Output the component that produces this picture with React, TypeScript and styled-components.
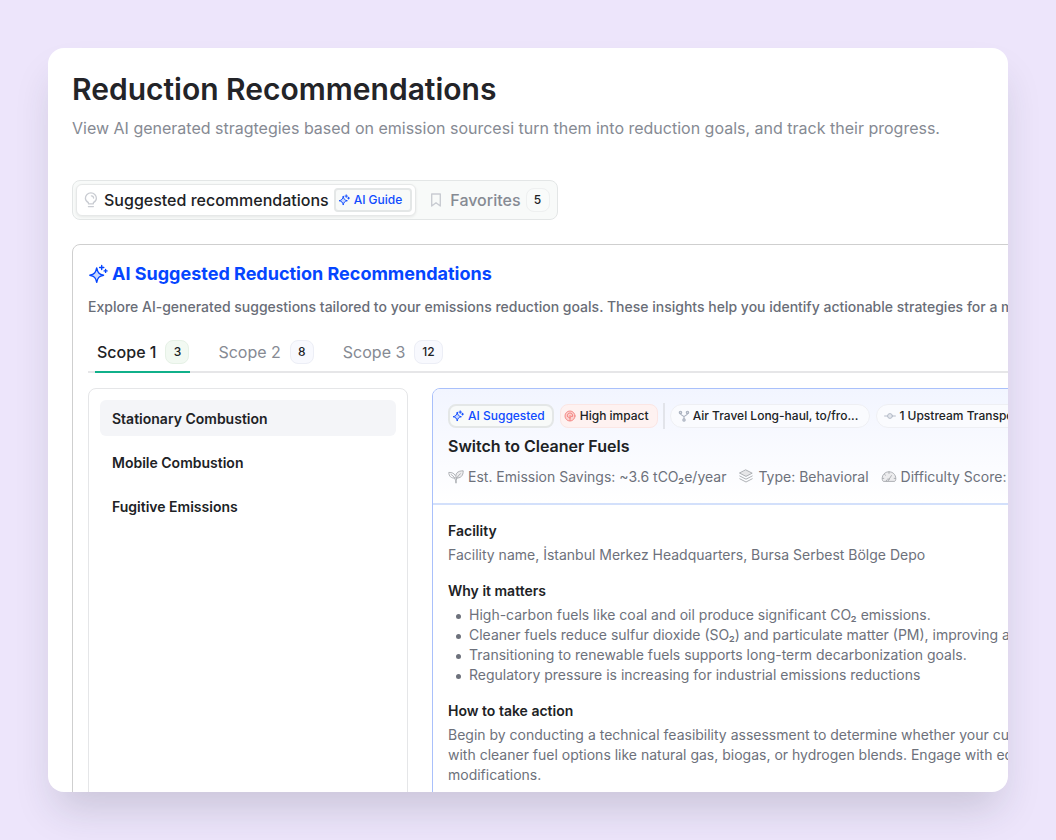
import React, { useState } from "react";
import styled, { createGlobalStyle } from "styled-components";

const GlobalStyle = createGlobalStyle`
  *, *::before, *::after { box-sizing: border-box; }
  body {
    margin: 0;
    background: #ede5fb;
    color: #202225;
    font-family: Inter, "Liberation Sans", sans-serif;
    -webkit-font-smoothing: antialiased;
  }
  h1, h2, h3, h4, p, ul { margin: 0; padding: 0; }
  button { font: inherit; color: inherit; background: none; border: 0; padding: 0; cursor: pointer; }
`;

const Page = styled.div`
  height: 100vh;
  padding: 48px;
`;

const Shell = styled.main`
  height: 100%;
  padding: 24px;
  overflow: hidden;
  background: #fff;
  border-radius: 16px;
  box-shadow: 0 24px 40px -8px rgba(40, 50, 60, 0.18);
`;

const Title = styled.h1`
  font-size: 30px;
  line-height: 34px;
  font-weight: 600;
  color: #232428;
`;

const Subtitle = styled.p`
  margin-top: 10px;
  font-size: 16px;
  line-height: 24px;
  color: #868a93;
  white-space: nowrap;
`;

const Switcher = styled.div`
  display: inline-flex;
  align-items: center;
  gap: 4px;
  height: 40px;
  margin-top: 40px;
  padding: 3px;
  border: 1px solid #e3e6e6;
  border-radius: 8px;
  background: #f8faf9;
`;

const SwitchTab = styled.button<{ $active?: boolean }>`
  display: flex;
  align-items: center;
  gap: 5px;
  height: 32px;
  padding: 0 3px 0 6px;
  border: 1px solid ${(p) => (p.$active ? "#e6e8e8" : "transparent")};
  border-radius: 6px;
  background: ${(p) => (p.$active ? "#fff" : "transparent")};
  box-shadow: ${(p) => (p.$active ? "0 1px 3px rgba(0, 0, 0, 0.08)" : "none")};
  color: ${(p) => (p.$active ? "#202225" : "#868a93")};
  font-size: 16px;
  line-height: 24px;
  font-weight: 500;
  white-space: nowrap;
`;

const Count = styled.span<{ $tone?: "green" | "blue" | "plain" }>`
  display: inline-flex;
  align-items: center;
  justify-content: center;
  min-width: 24px;
  height: 24px;
  padding: 0 7px;
  border: 1px solid ${(p) => (p.$tone === "green" ? "#e6f1e6" : p.$tone === "blue" ? "#eceef6" : "#eef0f0")};
  border-radius: 8px;
  background: ${(p) => (p.$tone === "green" ? "#f2f9f2" : p.$tone === "blue" ? "#f8f9fe" : "#f9fbfa")};
  color: #202225;
  font-size: 12px;
  line-height: 16px;
  font-weight: 500;
`;

const tagPadding = { guide: "0 8px 0 2px", ai: "0 7px 0 2px", impact: "0 8px 0 3px", source: "0 11px 0 7px" };

const Tag = styled.span<{ $kind: "guide" | "ai" | "impact" | "source" }>`
  display: inline-flex;
  flex: none;
  align-items: center;
  gap: ${(p) => (p.$kind === "source" ? "3px" : "4px")};
  height: 24px;
  padding: ${(p) => tagPadding[p.$kind]};
  border: ${(p) => (p.$kind === "guide" || p.$kind === "ai" ? "2px solid #e4e7e7" : p.$kind === "impact" ? "1px solid #fbe6e4" : "1px solid #eeeff3")};
  border-radius: ${(p) => (p.$kind === "guide" ? "4px" : p.$kind === "source" ? "12px" : "8px")};
  background: ${(p) => (p.$kind === "impact" ? "#fef2f1" : p.$kind === "source" ? "#fafbfe" : "#f8faf9")};
  color: ${(p) => (p.$kind === "guide" || p.$kind === "ai" ? "#0f4bff" : "#202225")};
  font-size: 12px;
  line-height: 16px;
  font-weight: 500;
  white-space: nowrap;
`;

const Panel = styled.section`
  width: max-content;
  min-width: 100%;
  margin-top: 24px;
  padding: 16px 15px 15px;
  border: 1px solid #cfcfcf;
  border-radius: 8px;
`;

const PanelTitle = styled.h2`
  display: flex;
  align-items: center;
  gap: 4px;
  font-size: 18px;
  line-height: 26px;
  font-weight: 700;
  color: #0545ff;
`;

const PanelText = styled.p`
  margin-top: 10px;
  font-size: 14px;
  line-height: 20px;
  font-weight: 500;
  color: #696d77;
  white-space: nowrap;
`;

const ScopeTabs = styled.div`
  display: flex;
  gap: 26px;
  margin-top: 16px;
  padding-left: 7px;
  box-shadow: inset 0 -2px #e6e6e8;
`;

const ScopeTab = styled.button<{ $active: boolean }>`
  display: flex;
  align-items: center;
  gap: 9px;
  height: 40px;
  padding: 0 1px 0 2px;
  border-bottom: 2px solid ${(p) => (p.$active ? "#10b08a" : "transparent")};
  color: ${(p) => (p.$active ? "#202225" : "#868a93")};
  font-size: 16px;
  line-height: 24px;
  font-weight: ${(p) => (p.$active ? 500 : 400)};
`;

const Columns = styled.div`
  display: flex;
  gap: 24px;
  margin-top: 15px;
`;

const SourceNav = styled.nav`
  display: flex;
  flex: none;
  flex-direction: column;
  gap: 8px;
  width: 320px;
  padding: 11px;
  border: 1px solid #e5e6e8;
  border-radius: 8px;
`;

const SourceItem = styled.button<{ $active: boolean }>`
  height: 36px;
  padding: 2px 12px 0;
  border-radius: 6px;
  background: ${(p) => (p.$active ? "#f4f5f8" : "transparent")};
  font-size: 14px;
  line-height: 20px;
  font-weight: 600;
  text-align: left;
`;

const Card = styled.article`
  flex: 1;
  border: 1px solid #a9c0fb;
  border-radius: 8px;
  overflow: hidden;
`;

const CardHead = styled.header`
  padding: 15px 15px 16px;
  border-bottom: 2px solid #d3e0fb;
  background: linear-gradient(#f2f5ff, #fff);
`;

const TagRow = styled.div`
  display: flex;
  align-items: center;
  gap: 6px;
`;

const Divider = styled.span`
  width: 2px;
  height: 26px;
  margin: -1px;
  background: #e2e4ea;
`;

const CardTitle = styled.h3`
  margin-top: 6px;
  font-size: 16px;
  line-height: 24px;
  font-weight: 600;
`;

const MetaRow = styled.div`
  display: flex;
  gap: 12px;
  margin-top: 9px;
  white-space: nowrap;
`;

const Meta = styled.span`
  display: flex;
  align-items: center;
  gap: 4px;
  font-size: 14px;
  line-height: 20px;
  color: #6d717b;
`;

const CardBody = styled.div`
  display: flex;
  flex-direction: column;
  gap: 16px;
  padding: 16px 15px 24px;
`;

const Block = styled.section`
  display: flex;
  flex-direction: column;
  gap: 4px;
  font-size: 14px;
  line-height: 20px;
  color: #6d717b;
  white-space: pre-line;
`;

const BlockTitle = styled.h4`
  font-size: 14px;
  line-height: 20px;
  font-weight: 600;
  color: #202225;
`;

const List = styled.ul`
  && { padding-left: 8px; }
  list-style: none;
`;

const Reason = styled.li`
  display: flex;
  align-items: center;
  gap: 8px;

  &::before {
    content: "";
    width: 5px;
    height: 5px;
    margin-top: 2px;
    border-radius: 50%;
    background: #6d717b;
  }
`;

const Icon = styled.svg`
  flex: none;
  fill: none;
  stroke-linecap: round;
  stroke-linejoin: round;
`;

const Svg = ({ size = 16, color = "currentColor", width = 1, children, box = 16 }: {
  size?: number; color?: string; width?: number; box?: number; children: React.ReactNode;
}) => (
  <Icon width={size} height={size} viewBox={`0 0 ${box} ${box}`} stroke={color} strokeWidth={width} aria-hidden="true">
    {children}
  </Icon>
);

const Sparkle = ({ size, width }: { size: number; width: number }) => (
  <Svg size={size} box={20} width={width}>
    <path d="M8.700 4C9.700 8.800 11 10.200 15.600 11.200 11 12.200 9.700 13.600 8.700 18.400 7.700 13.600 6.400 12.200 1.800 11.200 6.400 10.200 7.700 8.800 8.700 4Z" fill="#c9d8ff" />
    <path d="M13.700 1.400v4.200M11.600 3.500h4.200M17.600 5.400v3M16.100 6.900h3" />
  </Svg>
);

const Bulb = () => (
  <Svg color="#c9ccd2" width={1.3}>
    <path d="M5.400 11.800V10.600C3.600 9.600 2.400 8.200 2.400 6.200A5.500 5.300 0 0 1 13.400 6.200c0 2-1.200 3.400-3 4.400v1.200ZM5.400 14.600h5" />
    <path d="M8.400 3.800A2.300 2.300 0 0 1 10.600 6" />
  </Svg>
);

const Bookmark = () => (
  <Svg color="#c9ccd2" width={1.4} size={18} box={18}>
    <path d="M4.700 3h8.600v12L9 11.800 4.700 15Z" />
  </Svg>
);

const ImpactIcon = () => (
  <Svg size={12} box={12} color="#f4807e" width={0.9}>
    <circle cx="6" cy="6" r="5" fill="#fbd3d0" />
    <path d="M6 10.600V5.400M6 8.200 3.600 6.600M6 7.400 8.400 5.800M3.400 6.400C2.800 4.200 4.600 3 6 3s3.200 1.200 2.600 3.400" />
  </Svg>
);

const ForkIcon = () => (
  <Svg size={12} box={12} color="#a9b1bf" width={1.1}>
    <circle cx="2.500" cy="2.400" r="1.200" fill="#d5d9e0" />
    <circle cx="9.500" cy="2.400" r="1.200" fill="#d5d9e0" />
    <circle cx="6" cy="10" r="1.200" fill="#d5d9e0" />
    <path d="M2.500 3.600c0 2.200 3.500 1.400 3.500 3.400v1.800M9.500 3.600c0 2.200-3.500 1.400-3.500 3.400" />
  </Svg>
);

const NodeIcon = () => (
  <Svg size={12} box={12} color="#b4bbc8" width={1}>
    <circle cx="6" cy="6" r="2.400" fill="#e4e7ed" />
    <path d="M.6 6h3M8.400 6h3" />
  </Svg>
);

const LeafIcon = () => (
  <Svg color="#a6a9ae" width={0.9}>
    <path d="M8.200 9C6.600 4.600 9.600 1.800 15.200 1.800c.2 4.800-2.600 7.800-7 7.200Z" fill="#ececee" />
    <path d="M7 9C3.200 9.600 .8 7.200 .8 3.400c3 0 5.400 .8 6.400 3M3 5.400C6 7.200 7.800 9.800 8 13.800M8 13.800c0-4.200 1.400-6.800 4.400-9" />
  </Svg>
);

const LayersIcon = () => (
  <Svg color="#a6a9ae" width={0.9}>
    <path d="M8 1 14.200 4.200 8 7.400 1.800 4.200Z" fill="#e6e6e8" />
    <path d="M1.800 7 8 10.200 14.200 7M1.800 9.800 8 13l6.200-3.200" />
  </Svg>
);

const GaugeIcon = () => (
  <Svg color="#a6a9ae" width={0.9}>
    <path d="M2.400 12.400C1.500 12.400 1.200 11 1.200 9.600 1.200 5.600 4.200 2.800 8 2.800s6.800 2.800 6.800 6.800c0 1.400-.3 2.800-1.200 2.800Z" fill="#ececee" />
    <path d="M7 12 10.400 6.600M8 2.800v1.600M3.400 5.200l1.100 1M1.400 9.400h1.400M13.200 9.400h1.400M5.200 12.200c.2-2.200 2-2.600 3-2" />
  </Svg>
);

const scopes = [
  { name: "Scope 1", count: 3 },
  { name: "Scope 2", count: 8 },
  { name: "Scope 3", count: 12 },
];

const sources = ["Stationary Combustion", "Mobile Combustion", "Fugitive Emissions"];

const reasons = [
  "High-carbon fuels like coal and oil produce significant CO₂ emissions.",
  "Cleaner fuels reduce sulfur dioxide (SO₂) and particulate matter (PM), improving air quality.",
  "Transitioning to renewable fuels supports long-term decarbonization goals.",
  "Regulatory pressure is increasing for industrial emissions reductions",
];

export default function App() {
  const [view, setView] = useState(0);
  const [scope, setScope] = useState(0);
  const [source, setSource] = useState(0);

  return (
    <>
      <GlobalStyle />
      <Page>
        <Shell>
          <Title>Reduction Recommendations</Title>
          <Subtitle>
            View AI generated stragtegies based on emission sourcesi turn them into reduction goals, and track their progress.
          </Subtitle>

          <Switcher>
            <SwitchTab $active={view === 0} onClick={() => setView(0)}>
              <Bulb />
              Suggested recommendations
              <Tag $kind="guide"><Sparkle size={12} width={1.6} />AI Guide</Tag>
            </SwitchTab>
            <SwitchTab $active={view === 1} onClick={() => setView(1)}>
              <Bookmark />
              Favorites
              <Count $tone="plain">5</Count>
            </SwitchTab>
          </Switcher>

          <Panel>
            <PanelTitle><Sparkle size={20} width={1.4} />AI Suggested Reduction Recommendations</PanelTitle>
            <PanelText>
              Explore AI-generated suggestions tailored to your emissions reduction goals. These insights help you identify actionable strategies for a more sustainable future.
            </PanelText>

            <ScopeTabs>
              {scopes.map((s, i) => (
                <ScopeTab key={s.name} $active={scope === i} onClick={() => setScope(i)}>
                  {s.name}
                  <Count $tone={scope === i ? "green" : "blue"}>{s.count}</Count>
                </ScopeTab>
              ))}
            </ScopeTabs>

            <Columns>
              <SourceNav>
                {sources.map((name, i) => (
                  <SourceItem key={name} $active={source === i} onClick={() => setSource(i)}>{name}</SourceItem>
                ))}
              </SourceNav>

              <Card>
                <CardHead>
                  <TagRow>
                    <Tag $kind="ai"><Sparkle size={12} width={1.6} />AI Suggested</Tag>
                    <Tag $kind="impact"><ImpactIcon />High impact</Tag>
                    <Divider />
                    <Tag $kind="source"><ForkIcon />Air Travel Long-haul, to/fro...</Tag>
                    <Tag $kind="source"><NodeIcon />1 Upstream Transportation</Tag>
                  </TagRow>
                  <CardTitle>Switch to Cleaner Fuels</CardTitle>
                  <MetaRow>
                    <Meta><LeafIcon />Est. Emission Savings: ~3.6 tCO₂e/year</Meta>
                    <Meta><LayersIcon />Type: Behavioral</Meta>
                    <Meta><GaugeIcon />Difficulty Score: 3</Meta>
                  </MetaRow>
                </CardHead>
                <CardBody>
                  <Block>
                    <BlockTitle>Facility</BlockTitle>
                    <p>Facility name, İstanbul Merkez Headquarters, Bursa Serbest Bölge Depo</p>
                  </Block>
                  <Block>
                    <BlockTitle>Why it matters</BlockTitle>
                    <List>
                      {reasons.map((r) => <Reason key={r}>{r}</Reason>)}
                    </List>
                  </Block>
                  <Block>
                    <BlockTitle>How to take action</BlockTitle>
                    <p>
                      {"Begin by conducting a technical feasibility assessment to determine whether your current systems\nwith cleaner fuel options like natural gas, biogas, or hydrogen blends. Engage with equipment\nmodifications."}
                    </p>
                  </Block>
                </CardBody>
              </Card>
            </Columns>
          </Panel>
        </Shell>
      </Page>
    </>
  );
}
